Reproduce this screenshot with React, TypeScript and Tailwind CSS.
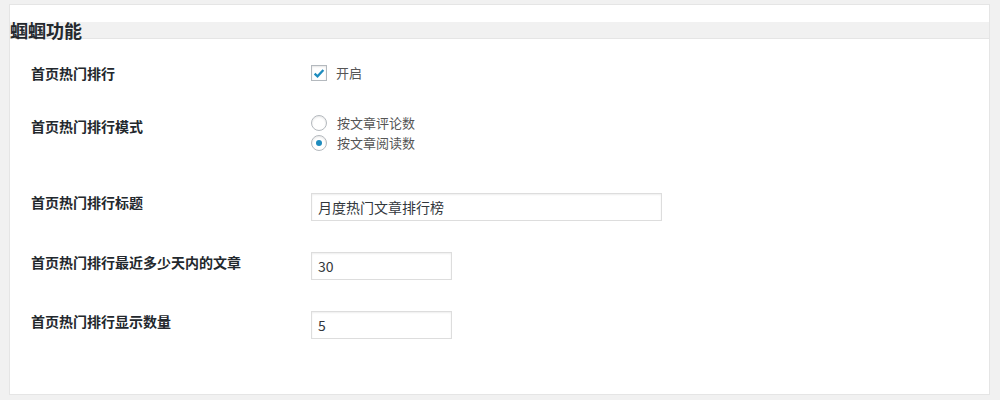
const font = { fontFamily: '"Noto Sans CJK SC", "Noto Sans", sans-serif' };

function Checkbox({ checked }: { checked?: boolean }) {
  return (
    <span className="flex h-4 w-4 items-center justify-center border border-[#b4b9be] bg-white shadow-[inset_0_1px_2px_rgba(0,0,0,0.1)]">
      {checked && (
        <svg viewBox="0 0 16 16" className="h-[15px] w-[15px]">
          <path d="M3 8.2 L6.3 11.3 L13 4" fill="none" stroke="#1e8cbe" strokeWidth="2.6" />
        </svg>
      )}
    </span>
  );
}

function Radio({ checked }: { checked?: boolean }) {
  return (
    <span className="flex h-4 w-4 items-center justify-center rounded-full border border-[#b4b9be] bg-white shadow-[inset_0_1px_2px_rgba(0,0,0,0.1)]">
      {checked && <span className="h-[6px] w-[6px] rounded-full bg-[#1e8cbe]" />}
    </span>
  );
}

function Label({ children, pt }: { children: string; pt: string }) {
  return (
    <div className={`w-[280px] shrink-0 text-[14px] font-bold leading-5 text-[#23282d] ${pt}`}>
      {children}
    </div>
  );
}

function TextInput({ value, width }: { value: string; width: string }) {
  return (
    <div
      className={`flex h-[28px] items-center border border-[#ddd] bg-white pl-[6px] text-[14px] text-[#32373c] shadow-[inset_0_1px_2px_rgba(0,0,0,0.07)] ${width}`}
    >
      {value}
    </div>
  );
}

export default function App() {
  return (
    <div className="min-h-[400px] bg-[#f1f1f1] pl-[9px] pr-[10px] pt-1" style={font}>
      <div className="border border-[#e5e5e5] bg-white pb-[55px]">
        <div className="h-[17px]" />
        <h2 className="h-[16px] bg-[#f1f1f1] text-[18px] font-bold leading-[16px] text-[#23282d]">
          蝈蝈功能
        </h2>
        <div className="border-b border-[#e5e5e5]" />
        <div className="pl-[21px]">
          <div className="mt-[20px] flex">
            <Label pt="pt-[4px]">首页热门排行</Label>
            <div className="flex items-center gap-[9px] pt-[4px]">
              <Checkbox checked />
              <span className="text-[13px] leading-4 text-[#555]">开启</span>
            </div>
          </div>

          <div className="mt-[27px] flex">
            <Label pt="pt-[6px]">首页热门排行模式</Label>
            <div className="flex flex-col pt-[3px] text-[13px] text-[#555]">
              <div className="flex h-5 items-center gap-[10px]">
                <Radio />
                <span>按文章评论数</span>
              </div>
              <div className="flex h-5 items-center gap-[10px]">
                <Radio checked />
                <span>按文章阅读数</span>
              </div>
            </div>
          </div>

          <div className="mt-[39px] flex">
            <Label pt="pt-0">首页热门排行标题</Label>
            <div className="pt-px">
              <TextInput value="月度热门文章排行榜" width="w-[351px]" />
            </div>
          </div>

          <div className="mt-[31px] flex">
            <Label pt="pt-0">首页热门排行最近多少天内的文章</Label>
            <TextInput value="30" width="w-[141px]" />
          </div>

          <div className="mt-[31px] flex">
            <Label pt="pt-0">首页热门排行显示数量</Label>
            <TextInput value="5" width="w-[141px]" />
          </div>
        </div>
      </div>
    </div>
  );
}
